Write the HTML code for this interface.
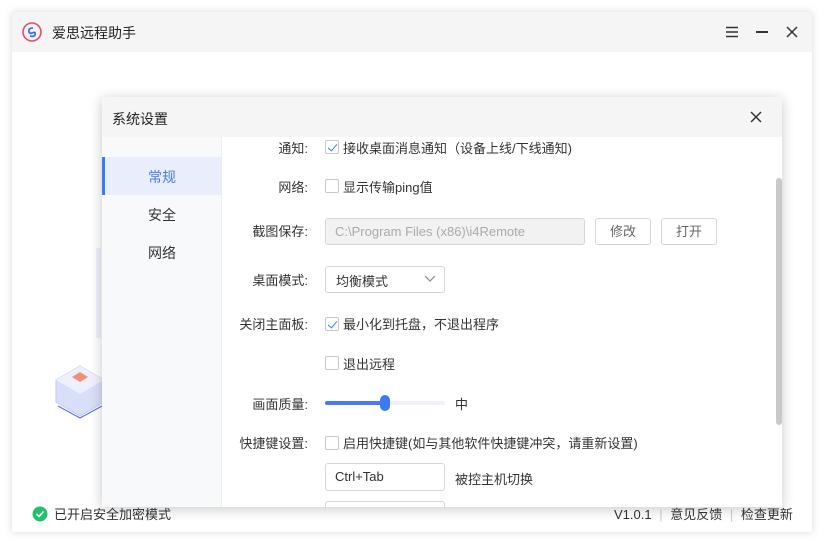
<!DOCTYPE html>
<html><head><meta charset="utf-8"><style>
*{margin:0;padding:0;box-sizing:border-box}
body{width:824px;height:544px;background:#fff;position:relative;overflow:hidden;font-family:"Liberation Sans","Noto Sans CJK SC",sans-serif;font-size:13px;color:#333}
.a{position:absolute}
.win{left:12px;top:12px;width:800px;height:520px;background:#fff;box-shadow:0 0 8px rgba(0,0,0,.15)}
.tb{left:0;top:0;width:800px;height:40px;background:#f5f5f5}
.dlg{left:102px;top:97px;width:680px;height:410px;background:#fff;box-shadow:0 2px 12px rgba(0,0,0,.22);overflow:hidden}
.lbl{width:100px;text-align:right;left:106px}
.cb{width:14px;height:14px;border:1px solid #c8c8c8;border-radius:2px;background:#fff;left:223px}
.cb.on::after{content:"";position:absolute;left:4px;top:1px;width:4px;height:8px;border:solid #3a7cf5;border-width:0 1.5px 1.5px 0;transform:rotate(40deg)}
.inp{border:1px solid #d6d6d6;border-radius:3px;background:#fff}
.btn{border:1px solid #d6d6d6;border-radius:3px;text-align:center;line-height:26px;color:#666}
</style></head><body>
<div class="a win">
 <div class="a tb">
  <svg class="a" style="left:10px;top:10px" width="20" height="20" viewBox="0 0 20 20"><circle cx="10" cy="10" r="9" fill="none" stroke="#e84b6a" stroke-width="1.6"/><path d="M11 6 Q6 6 7 10 Q8 12 10 11 Q14 9 13 13 Q12 15 8 14" fill="none" stroke="#3a6ff5" stroke-width="1.8"/></svg>
  <div class="a" style="left:40px;top:11px;font-size:14px;color:#222">爱思远程助手</div>
  <svg class="a" style="left:714px;top:14px" width="12" height="12"><path d="M0 1.5H12M0 6H12M0 10.5H12" stroke="#333" stroke-width="1.4"/></svg>
  <div class="a" style="left:744px;top:19px;width:12px;height:1.5px;background:#333"></div>
  <svg class="a" style="left:774px;top:14px" width="12" height="12"><path d="M1 1L11 11M11 1L1 11" stroke="#333" stroke-width="1.5"/></svg>
 </div>
 <svg class="a" style="left:84px;top:216px" width="16" height="120"><path d="M2 20 L2 110" stroke="#eef0fb" stroke-width="6"/></svg>
 <svg class="a" style="left:38px;top:350px" width="60" height="60" viewBox="0 0 60 60"><path d="M30 4 L54 18 L54 40 L30 54 L6 40 L6 18Z" fill="#d9defa" stroke="#c4cbf5"/><path d="M30 4 L54 18 L30 32 L6 18Z" fill="#eef0fd"/><path d="M30 10 L38 15 L30 20 L22 15Z" fill="#f08f7a"/><path d="M8 44 L30 56 L52 44" fill="none" stroke="#5a6ef0" stroke-width="1.2"/></svg>
 <svg class="a" style="left:20px;top:494px" width="16" height="16"><circle cx="8" cy="8" r="7.5" fill="#1fc16b"/><path d="M4.5 8 L7 10.5 L11.5 5.5" fill="none" stroke="#fff" stroke-width="1.6"/></svg>
 <div class="a" style="left:42px;top:492px;font-size:13px">已开启安全加密模式</div>
 <div class="a" style="left:602px;top:492px;font-size:13px">V1.0.1 <span style="color:#ccc;margin:0 4px">|</span> 意见反馈 <span style="color:#ccc;margin:0 4px">|</span> 检查更新</div>
</div>
<div class="a dlg">
 <div class="a" style="left:0;top:0;width:680px;height:40px;background:#f5f5f5"></div>
 <div class="a" style="left:10px;top:12px;font-size:14px;color:#222">系统设置</div>
 <svg class="a" style="left:648px;top:14px" width="12" height="12"><path d="M1 1L11 11M11 1L1 11" stroke="#333" stroke-width="1.5"/></svg>
 <div class="a" style="left:0;top:40px;width:120px;height:370px;background:#f8f9fb;border-right:1px solid #eee"></div>
 <div class="a" style="left:0;top:60px;width:120px;height:38px;background:#e8eefb"></div>
 <div class="a" style="left:0;top:60px;width:3px;height:38px;background:#3a7cf5"></div>
 <div class="a" style="left:46px;top:70px;font-size:14px;color:#4a7cf0">常规</div>
 <div class="a" style="left:46px;top:108px;font-size:14px">安全</div>
 <div class="a" style="left:46px;top:146px;font-size:14px">网络</div>
 <div class="a" style="left:674px;top:81px;width:6px;height:247px;background:#c9c9c9;border-radius:3px"></div>

 <div class="a lbl" style="top:41px">通知:</div><div class="a cb on" style="top:43px"></div><div class="a" style="left:241px;top:41px">接收桌面消息通知（设备上线/下线通知)</div>
 <div class="a lbl" style="top:80px">网络:</div><div class="a cb" style="top:82px"></div><div class="a" style="left:241px;top:80px">显示传输ping值</div>
 <div class="a lbl" style="top:124px">截图保存:</div>
 <div class="a inp" style="left:223px;top:121px;width:260px;height:27px;background:#f2f2f2;color:#aaa;padding:5px 9px">C:\Program Files (x86)\i4Remote</div>
 <div class="a btn" style="left:493px;top:121px;width:56px;height:27px">修改</div>
 <div class="a btn" style="left:559px;top:121px;width:56px;height:27px">打开</div>
 <div class="a lbl" style="top:173px">桌面模式:</div>
 <div class="a inp" style="left:223px;top:169px;width:120px;height:27px;padding:4px 10px">均衡模式</div>
 <svg class="a" style="left:322px;top:178px" width="12" height="8"><path d="M1 1 L6 6 L11 1" fill="none" stroke="#888" stroke-width="1.2"/></svg>
 <div class="a lbl" style="top:217px">关闭主面板:</div><div class="a cb on" style="top:220px"></div><div class="a" style="left:241px;top:217px">最小化到托盘，不退出程序</div>
 <div class="a cb" style="top:259px"></div><div class="a" style="left:241px;top:257px">退出远程</div>
 <div class="a lbl" style="top:297px">画面质量:</div>
 <div class="a" style="left:223px;top:304px;width:120px;height:4px;background:#eef0fd;border-radius:2px"></div>
 <div class="a" style="left:223px;top:304px;width:60px;height:4px;background:#4a78f5;border-radius:2px"></div>
 <div class="a" style="left:278px;top:298px;width:10px;height:16px;background:#3a7cf5;border-radius:5px"></div>
 <div class="a" style="left:353px;top:297px">中</div>
 <div class="a lbl" style="top:336px">快捷键设置:</div><div class="a cb" style="top:339px"></div><div class="a" style="left:241px;top:336px">启用快捷键(如与其他软件快捷键冲突，请重新设置)</div>
 <div class="a inp" style="left:223px;top:366px;width:120px;height:28px;padding:5px 9px">Ctrl+Tab</div>
 <div class="a" style="left:353px;top:372px">被控主机切换</div>
 <div class="a inp" style="left:223px;top:404px;width:120px;height:28px"></div>
</div>
</body></html>
